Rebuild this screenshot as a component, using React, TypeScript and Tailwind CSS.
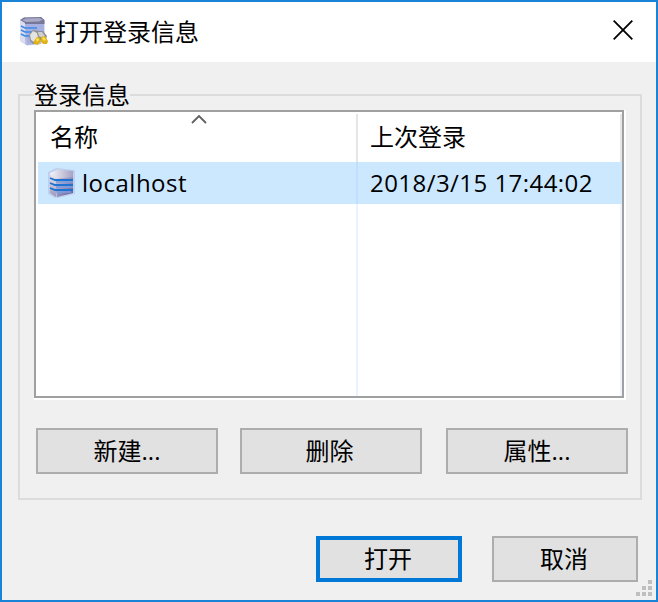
import type { ReactNode } from "react";

function ServerIcon() {
  return (
    <svg className="h-8 w-7 shrink-0" viewBox="0 0 28 32">
      <defs>
        <linearGradient id="side" x1="0" y1="0" x2="1" y2="1">
          <stop offset="0" stopColor="#c9c7de" />
          <stop offset=".5" stopColor="#9795c2" />
          <stop offset="1" stopColor="#61598f" />
        </linearGradient>
        <linearGradient id="lid">
          <stop offset="0" stopColor="#f7f5f7" />
          <stop offset="1" stopColor="#a5a2c6" />
        </linearGradient>
        <linearGradient id="edge" x1="0" y1="0" x2="0" y2="1">
          <stop offset="0" stopColor="#efedf3" />
          <stop offset="1" stopColor="#9a97bb" />
        </linearGradient>
      </defs>
      <path d="M0 5 8 1 27 3V27L10 31 7 31 0 27Z" fill="#a9add2" opacity=".4" />
      <path d="M7 9 25 8V26L9 30Z" fill="url(#side)" />
      <path d="M2 6 10 2.500 25 4V10L7 12Z" fill="url(#lid)" />
      <path d="M2 6 8 10V30L2 26Z" fill="url(#edge)" />
      <path d="M2 11 7 13H25M2 16 7 18H25M2 21 7 23H25" fill="none" stroke="#1f73d0" strokeWidth="1.800" />
      <path d="M8 15H25M8 20H25M8 25H23" fill="none" stroke="#7c9fe0" strokeWidth="1.300" />
    </svg>
  );
}

function ConnectionIcon() {
  return (
    <svg className="h-8 w-8 shrink-0" viewBox="0 0 32 32">
      <path d="M1 4 5 1.500 22 1 25.500 4V22L22 28 8 29.500 1 25Z" fill="#bcc0e0" />
      <path d="M6 7H25V24L8 29Z" fill="#a6b1e2" />
      <path d="M1 4 5 1.500 22 1 25.500 4V8H6Z" fill="#77779c" />
      <path d="M3 4 7 2.500 20 2 24 3.500 20 5.500 7 6Z" fill="#a9a9c5" />
      <path d="M1 4 6 7V28L1 25Z" fill="#dcdeef" />
      <path d="M2 10 6 12H18M2 14 6 16H14M2 18 6 20H11" fill="none" stroke="#3c8ae6" strokeWidth="1.600" />
      <path d="M10 19 14 14 20 15 24 15 28 20 27 23 21 24 18 28H14L11 25Z" fill="#8e8e95" />
      <path d="M11 19 14 15 18 17 19 21 15 26 12 24Z" fill="#e3e3e0" />
      <path d="M19 16 23 16 26 20 23 22 20 20Z" fill="#d0d0ce" />
      <path d="M15 25 18 21 20 21 22 25 19 29 15 28Z" fill="#dfb318" />
      <path d="M22 21 26 20 29 25 28 28 24 28 22 25Z" fill="#dfb318" />
      <path d="M17 23 19 22 20 24 18 26ZM23 22 25 21 27 24 25 25Z" fill="#ffe45a" />
    </svg>
  );
}

function Button({ children, className }: { children: ReactNode; className: string }) {
  return (
    <button className={`flex h-[46px] items-center justify-center bg-[#e1e1e1] text-[24px] leading-6 ${className}`}>
      {children}
    </button>
  );
}

export default function App() {
  return (
    <div className="flex h-[602px] w-[658px] flex-col border-2 border-[#1883d7] bg-[#f0f0f0] font-['Open_Sans','Noto_Sans_CJK_SC',sans-serif] text-[24px] leading-6 text-black">
      <header className="flex h-[60px] shrink-0 items-center justify-between bg-white pr-[23px] pl-[17px]">
        <div className="flex items-center">
          <ConnectionIcon />
          <h1 className="mb-[3px] ml-1 font-['Noto_Sans_CJK_SC',sans-serif]">打开登录信息</h1>
        </div>
        <button aria-label="关闭" className="-mt-1">
          <svg className="h-5 w-5" viewBox="0 0 20 20" fill="none" stroke="#000" strokeWidth="1.800">
            <path d="M.7.7 19.300 19.300M19.300.7.7 19.300" />
          </svg>
        </button>
      </header>

      <fieldset className="mr-[14px] ml-4 mt-[21px] h-[417px] shrink-0 border-2 border-[#dcdcdc] pl-[14px]">
        <legend className="h-6 font-['Noto_Sans_CJK_SC',sans-serif] leading-[22px]">登录信息</legend>
        <div className="mt-[3px] h-[290px] w-[592px] border-r-2 border-b-2 border-white">
          <div className="flex h-[288px] w-[590px] flex-col border-2 border-[#a0a0a0] bg-white pl-[2px]">
            <div className="mt-0.5 flex h-12 shrink-0">
              <div className="flex w-80 justify-between border-r-2 border-[#e5e5e5] pl-3">
                <span className="mt-[11px]">名称</span>
                <svg className="mr-[149px] h-3 w-4" viewBox="0 0 16 12" fill="none" stroke="#606060" strokeWidth="1.800">
                  <path d="m1 9 7-7 7 7" />
                </svg>
              </div>
              <div className="flex-1 border-r-2 border-[#e5e5e5] pl-3">
                <span className="mt-[11px] block">上次登录</span>
              </div>
            </div>
            <div className="flex h-[42px] shrink-0 bg-[#cce8ff]">
              <div className="flex w-80 items-center border-r-2 border-[#bfdfff] pl-[10px]">
                <ServerIcon />
                <span className="ml-1.5 tracking-[0.5px]">localhost</span>
              </div>
              <div className="flex flex-1 items-center pl-3">
                <span className="tracking-[0.45px] whitespace-nowrap">2018/3/15 17:44:02</span>
              </div>
            </div>
            <div className="flex flex-1">
              <div className="w-80 border-r-2 border-[#eaf3ff]" />
              <div className="flex-1 border-r-2 border-[#eaf3ff]" />
            </div>
          </div>
        </div>
        <div className="mt-7 ml-[2px] flex">
          <Button className="w-[182px] border-2 border-[#adadad]">新建...</Button>
          <Button className="ml-[22px] w-[182px] border-2 border-[#adadad] pr-[3px]">删除</Button>
          <Button className="ml-6 w-[182px] border-2 border-[#adadad]">属性...</Button>
        </div>
      </fieldset>

      <footer className="mt-9 flex flex-1 justify-end">
        <Button className="w-[146px] border-4 border-[#0078d7] pr-0.5">打开</Button>
        <Button className="ml-[30px] w-[146px] border-2 border-[#adadad] pr-0.5">取消</Button>
        <svg className="-ml-0.5 mr-1 mb-1 h-4 w-4 self-end" viewBox="0 0 16 16" fill="#bfbfbf">
          <path d="M12 0h4v4h-4zM6 6h4v4H6zM12 6h4v4h-4zM0 12h4v4H0zM6 12h4v4H6zM12 12h4v4h-4z" />
        </svg>
      </footer>
    </div>
  );
}
